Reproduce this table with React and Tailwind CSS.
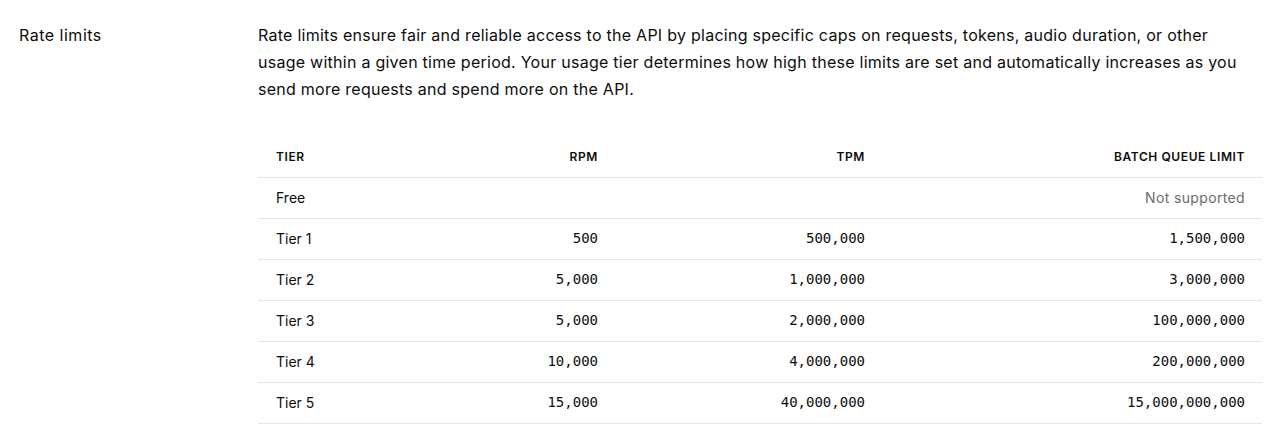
const rows = [
  ["Free", "", "", "Not supported"],
  ["Tier 1", "500", "500,000", "1,500,000"],
  ["Tier 2", "5,000", "1,000,000", "3,000,000"],
  ["Tier 3", "5,000", "2,000,000", "100,000,000"],
  ["Tier 4", "10,000", "4,000,000", "200,000,000"],
  ["Tier 5", "15,000", "40,000,000", "15,000,000,000"],
];

const mono = { fontFamily: '"DejaVu Sans Mono", monospace' };

export default function App() {
  return (
    <div className="bg-white w-[1280px] h-[446px] text-[#0d0d0d] font-['Inter',sans-serif]">
      <div className="flex pt-[24px]">
        <div className="w-[258px] pl-[19px] text-[16px] leading-[22px] tracking-[0.5px]">Rate limits</div>
        <div className="w-[1004px]">
          <p className="text-[16px] leading-[27px] pr-[10px] -mt-[2px] tracking-[0.26px]">
            Rate limits ensure fair and reliable access to the API by placing specific caps on requests, tokens, audio duration, or other usage within a given time period. Your usage tier determines how high these limits are set and automatically increases as you send more requests and spend more on the API.
          </p>
          <table className="w-[1004px] mt-[34px] border-collapse table-fixed">
            <colgroup>
              <col className="w-[178px]" />
              <col className="w-[179px]" />
              <col className="w-[267px]" />
              <col className="w-[380px]" />
            </colgroup>
            <thead>
              <tr className="border-b border-[#e6e6e6] h-[40px]">
                <th className="text-left pl-[18px] text-[12px] font-semibold tracking-[0.6px] uppercase">Tier</th>
                <th className="text-right pr-[17px] text-[12px] font-semibold tracking-[0.6px] uppercase">RPM</th>
                <th className="text-right pr-[17px] text-[12px] font-semibold tracking-[0.6px] uppercase">TPM</th>
                <th className="text-right pr-[17px] text-[12px] font-semibold tracking-[0.6px] uppercase">Batch queue limit</th>
              </tr>
            </thead>
            <tbody>
              {rows.map((r) => (
                <tr key={r[0]} className="border-b border-[#e6e6e6] h-[41px]">
                  <td className="pl-[18px] text-[14px]">{r[0]}</td>
                  <td className="text-right pr-[17px] text-[14px]" style={mono}>{r[1]}</td>
                  <td className="text-right pr-[17px] text-[14px]" style={mono}>{r[2]}</td>
                  {r[3] === "Not supported" ? (
                    <td className="text-right pr-[17px] text-[14px] tracking-[0.35px] text-[#6b6b6b]">{r[3]}</td>
                  ) : (
                    <td className="text-right pr-[17px] text-[14px]" style={mono}>{r[3]}</td>
                  )}
                </tr>
              ))}
            </tbody>
          </table>
        </div>
      </div>
    </div>
  );
}
